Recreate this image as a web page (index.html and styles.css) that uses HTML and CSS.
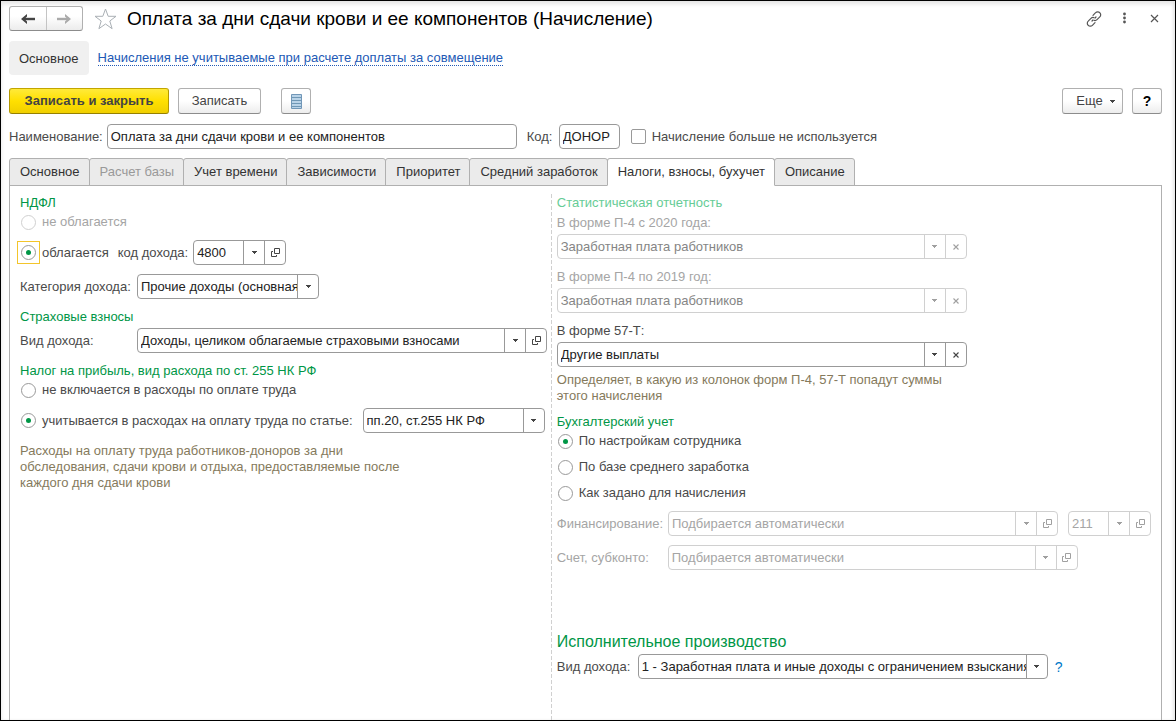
FILE: index.html
```html
<!DOCTYPE html>
<html lang="ru">
<head>
<meta charset="utf-8">
<title>Оплата за дни сдачи крови и ее компонентов (Начисление)</title>
<link rel="stylesheet" href="styles.css">
</head>
<body>
<svg class="defs" aria-hidden="true">
  <symbol id="i-down" viewBox="0 0 5 3"><path d="M0 0h5v1h-1v1h-1v1h-1v-1h-1v-1h-1z" fill="currentColor"/></symbol>
  <symbol id="i-open" viewBox="0 0 9 9"><path d="M3.5 .5h5v5h-5zM2 3.500h-1.500v5h5v-1.500" fill="none" stroke="currentColor"/></symbol>
  <symbol id="i-clear" viewBox="0 0 6 6"><path d="M.5 .5l5 5M5.500 .5l-5 5" fill="none" stroke="currentColor" stroke-width="1.100"/></symbol>
</svg>
<div class="window">
  <header class="titlebar">
    <div class="history">
      <button class="history-btn" type="button" aria-label="Назад"><svg width="14" height="10" viewBox="0 0 14 10"><path d="M2 5h12" stroke="#444" stroke-width="2.400"/><path d="M6 0v2.500L3.500 5 6 7.500V10L0 5z" fill="#444"/></svg></button>
      <button class="history-btn" type="button" aria-label="Вперед"><svg width="14" height="10" viewBox="0 0 14 10"><path d="M12 5H0" stroke="#aaa" stroke-width="2.400"/><path d="M8 0v2.500L10.500 5 8 7.500V10l6-5z" fill="#aaa"/></svg></button>
    </div>
    <button class="plain-btn star" type="button" aria-label="Избранное"><svg width="23" height="22" viewBox="0 0 23 22"><path d="M11.500 1l2.700 7.300h7.800l-6.200 4.700 2.300 7.700-6.600-4.700-6.600 4.700 2.300-7.700L1 8.300h7.800z" fill="#fff" stroke="#aab0b5"/></svg></button>
    <h1 class="title">Оплата за дни сдачи крови и ее компонентов (Начисление)</h1>
    <div class="window-tools">
      <button class="plain-btn" type="button" aria-label="Ссылка"><svg width="16" height="16" viewBox="0 0 16 16" fill="none" stroke="#555" stroke-width="1.200" stroke-linecap="round"><path d="M7 4.300l2.600-2.600a2.900 2.900 0 0 1 4.200 0 2.900 2.900 0 0 1 0 4.200L11 8.700a2.900 2.900 0 0 1-2.800.7M9 11.700l-2.600 2.600a2.900 2.900 0 0 1-4.200 0 2.900 2.900 0 0 1 0-4.200L5 7.300a2.900 2.900 0 0 1 2.800-.7M6 10l1-1M9 7l1-1"/></svg></button>
      <button class="plain-btn" type="button" aria-label="Меню"><svg width="16" height="16" viewBox="0 0 16 16" fill="#555"><circle cx="8.500" cy="3" r="1.400"/><circle cx="8.500" cy="7" r="1.400"/><circle cx="8.500" cy="11" r="1.400"/></svg></button>
      <button class="plain-btn" type="button" aria-label="Закрыть"><svg width="16" height="16" viewBox="0 0 16 16"><path d="M5 4l7 7M12 4l-7 7" stroke="#555" stroke-width="1.200"/></svg></button>
    </div>
  </header>

  <nav class="sections">
    <a class="section-current" href="#main">Основное</a>
    <a class="section-link" href="#list">Начисления не учитываемые при расчете доплаты за совмещение</a>
  </nav>

  <div class="toolbar">
    <button class="btn btn-primary" type="button">Записать и закрыть</button>
    <button class="btn btn-save" type="button">Записать</button>
    <button class="btn btn-icon btn-list" type="button" aria-label="Список"><svg width="11" height="15" viewBox="0 0 11 15"><path d="M.5 .5h10v14H.5z" fill="#b9d3e8" stroke="#7197b8"/><path d="M1 3.500h9M1 6.500h9M1 9.500h9M1 12.500h9" stroke="#6f97b5"/></svg></button>
    <button class="btn btn-more" type="button">Еще <svg width="5" height="3"><use href="#i-down"/></svg></button>
    <button class="btn btn-icon btn-help" type="button">?</button>
  </div>

  <div class="row ident">
    <label for="name">Наименование:</label>
    <input class="text name" id="name" type="text" value="Оплата за дни сдачи крови и ее компонентов">
    <label class="code-label" for="code">Код:</label>
    <input class="text code" id="code" type="text" value="ДОНОР">
    <label class="check"><input type="checkbox">Начисление больше не используется</label>
  </div>

  <div class="tabs" role="tablist">
    <button class="tab" role="tab" type="button">Основное</button>
    <button class="tab" role="tab" type="button" disabled>Расчет базы</button>
    <button class="tab" role="tab" type="button">Учет времени</button>
    <button class="tab" role="tab" type="button">Зависимости</button>
    <button class="tab" role="tab" type="button">Приоритет</button>
    <button class="tab" role="tab" type="button">Средний заработок</button>
    <button class="tab tab-active" role="tab" type="button" aria-selected="true">Налоги, взносы, бухучет</button>
    <button class="tab" role="tab" type="button">Описание</button>
  </div>

  <main class="panel">
    <div class="column">
      <section class="group">
        <h2>НДФЛ</h2>
        <div class="options">
          <label class="radio off"><input type="radio" name="ndfl" disabled>не облагается</label>
          <div class="row">
            <label class="radio"><span class="focus-frame"><input type="radio" name="ndfl" checked></span>облагается</label>
            <label class="income-code" for="income-code">код дохода:</label>
            <div class="combo w-code"><select id="income-code"><option>4800</option></select><span class="arrow"><svg width="5" height="3"><use href="#i-down"/></svg></span><button type="button" aria-label="Открыть"><svg width="9" height="9"><use href="#i-open"/></svg></button></div>
          </div>
        </div>
      </section>
      <div class="row">
        <label class="cap" for="category">Категория дохода:</label>
        <div class="combo w-category"><select id="category"><option>Прочие доходы (основная налоговая база)</option></select><span class="arrow"><svg width="5" height="3"><use href="#i-down"/></svg></span></div>
      </div>
      <section class="group">
        <h2>Страховые взносы</h2>
        <div class="row">
          <label class="cap" for="insurance">Вид дохода:</label>
          <div class="combo w-wide"><select id="insurance"><option>Доходы, целиком облагаемые страховыми взносами</option></select><span class="arrow"><svg width="5" height="3"><use href="#i-down"/></svg></span><button type="button" aria-label="Открыть"><svg width="9" height="9"><use href="#i-open"/></svg></button></div>
        </div>
      </section>
      <section class="group">
        <h2>Налог на прибыль, вид расхода по ст. 255 НК РФ</h2>
        <div class="options">
          <label class="radio"><input type="radio" name="profit">не включается в расходы по оплате труда</label>
          <div class="row article">
            <label class="radio"><input type="radio" name="profit" checked>учитывается в расходах на оплату труда по статье:</label>
            <div class="combo w-category"><select aria-label="Статья"><option>пп.20, ст.255 НК РФ</option></select><span class="arrow"><svg width="5" height="3"><use href="#i-down"/></svg></span></div>
          </div>
        </div>
      </section>
      <p class="hint">Расходы на оплату труда работников-доноров за дни обследования, сдачи крови и отдыха, предоставляемые после каждого дня сдачи крови</p>
    </div>

    <div class="column column-right">
      <section class="group off">
        <h2>Статистическая отчетность</h2>
        <label class="above" for="p4-2020">В форме П-4 с 2020 года:</label>
        <div class="combo w-wide"><select id="p4-2020" disabled><option>Заработная плата работников</option></select><span class="arrow"><svg width="5" height="3"><use href="#i-down"/></svg></span><button type="button" aria-label="Очистить" disabled><svg width="6" height="6"><use href="#i-clear"/></svg></button></div>
      </section>
      <div class="group off">
        <label class="above" for="p4-2019">В форме П-4 по 2019 год:</label>
        <div class="combo w-wide"><select id="p4-2019" disabled><option>Заработная плата работников</option></select><span class="arrow"><svg width="5" height="3"><use href="#i-down"/></svg></span><button type="button" aria-label="Очистить" disabled><svg width="6" height="6"><use href="#i-clear"/></svg></button></div>
      </div>
      <div class="group">
        <label class="above" for="f57">В форме 57-Т:</label>
        <div class="combo w-wide"><select id="f57"><option>Другие выплаты</option></select><span class="arrow"><svg width="5" height="3"><use href="#i-down"/></svg></span><button type="button" aria-label="Очистить"><svg width="6" height="6"><use href="#i-clear"/></svg></button></div>
        <p class="hint">Определяет, в какую из колонок форм П-4, 57-Т попадут суммы этого начисления</p>
      </div>
      <section class="group">
        <h2>Бухгалтерский учет</h2>
        <div class="options">
          <label class="radio"><input type="radio" name="acc" checked>По настройкам сотрудника</label>
          <label class="radio"><input type="radio" name="acc">По базе среднего заработка</label>
          <label class="radio"><input type="radio" name="acc">Как задано для начисления</label>
          <div class="row off auto">
            <label class="cap-right" for="fin">Финансирование:</label>
            <div class="combo w-fin"><select id="fin" disabled><option>Подбирается автоматически</option></select><span class="arrow"><svg width="5" height="3"><use href="#i-down"/></svg></span><button type="button" aria-label="Открыть" disabled><svg width="9" height="9"><use href="#i-open"/></svg></button></div>
            <div class="combo w-kosgu"><select aria-label="КОСГУ" disabled><option>211</option></select><span class="arrow"><svg width="5" height="3"><use href="#i-down"/></svg></span><button type="button" aria-label="Открыть" disabled><svg width="9" height="9"><use href="#i-open"/></svg></button></div>
          </div>
        </div>
      </section>
      <div class="row off auto">
        <label class="cap-right" for="account">Счет, субконто:</label>
        <div class="combo w-wide"><select id="account" disabled><option>Подбирается автоматически</option></select><span class="arrow"><svg width="5" height="3"><use href="#i-down"/></svg></span><button type="button" aria-label="Открыть" disabled><svg width="9" height="9"><use href="#i-open"/></svg></button></div>
      </div>
      <section class="group enforcement">
        <h2 class="big">Исполнительное производство</h2>
        <div class="row">
          <label class="cap-enf" for="enf">Вид дохода:</label>
          <div class="combo w-wide"><select id="enf"><option>1 - Заработная плата и иные доходы с ограничением взыскания</option></select><span class="arrow"><svg width="5" height="3"><use href="#i-down"/></svg></span></div>
          <a class="help" href="#help">?</a>
        </div>
      </section>
    </div>
  </main>
</div>
</body>
</html>
```
FILE: styles.css
```css
* { box-sizing: border-box; }

body {
  margin: 0;
  background: #fff;
  color: #4a4a4a;
  font: 13px/16px "Liberation Sans", Arial, sans-serif;
}

button, input, select { font: inherit; color: inherit; margin: 0; }
h1, h2, p { margin: 0; font-weight: normal; }
svg { display: block; flex: none; }
.defs { position: absolute; width: 0; height: 0; }

.window {
  display: flex;
  flex-direction: column;
  min-height: 100vh;
  padding: 5px 13px 0 8px;
  border: 1px solid #000;
  box-shadow: inset 0 3px 4px #e4e4e4, inset -2px 0 3px #eee;
}

.titlebar { display: flex; align-items: center; height: 25px; }
.history {
  display: flex;
  width: 74px;
  height: 25px;
  border: 1px solid #b0b0b0;
  border-bottom-color: #8c8c8c;
  border-radius: 3px;
  background: linear-gradient(#fff 40%, #ececec);
}
.history-btn { flex: 1; display: grid; place-items: center; padding: 0; border: 0; background: none; }
.history-btn + .history-btn { border-left: 1px solid #c4c4c4; }
.plain-btn { padding: 0; border: 0; background: none; }
.star { margin: 0 10px 0 11px; }
.title { flex: 1; color: #000; font-size: 19px; line-height: 24px; white-space: nowrap; }
.window-tools { display: flex; gap: 14px; }

.sections { display: flex; align-items: center; gap: 9px; margin-top: 10px; }
.section-current {
  padding: 10px 10px 8px;
  border-radius: 4px;
  background: #f0f0f0;
  color: #333;
  text-decoration: none;
}
.section-link { padding-top: 1px; color: #2259b5; line-height: 14px; text-decoration: none; border-bottom: 1px dotted #2259b5; }

.toolbar { display: flex; gap: 9px; margin-top: 13px; }
.btn {
  height: 26px;
  padding: 0;
  border: 1px solid #b0b0b0;
  border-bottom-color: #8c8c8c;
  border-radius: 3px;
  background: linear-gradient(#fff 50%, #ededed);
  color: #444;
}
.btn-primary {
  width: 160px;
  border-color: #c2a500 #b39800 #968000;
  background: linear-gradient(#ffea3a, #ffe000 50%, #f0cf00);
  font-weight: bold;
}
.btn-save { width: 83px; }
.btn-icon { display: grid; place-items: center; width: 30px; }
.btn-list { margin-left: 11px; }
.btn-more { display: flex; align-items: center; justify-content: center; gap: 7px; width: 61px; margin-left: auto; padding-left: 6px; }
.btn-help { color: #000; font-size: 14px; font-weight: bold; }

.row { display: flex; align-items: center; gap: 5px; }
.ident { gap: 4px; margin-top: 10px; }
.text { height: 25px; padding: 0 3px; border: 1px solid #999; border-radius: 4px; background: #fff; color: #222; }
.name { width: 410px; }
.code { width: 61px; }
.code-label { min-width: 28px; margin-left: 6px; }
.check { display: flex; align-items: center; gap: 6px; margin-left: 7px; }
.check input { appearance: none; width: 15px; height: 15px; border: 1px solid #999; border-radius: 2px; background: #fff; }
.check input:checked { background: #009646; }

.tabs { display: flex; margin-top: 9px; }
.tab {
  height: 28px;
  margin: 0 0 -1px -1px;
  padding: 0 9px 0 10px;
  border: 1px solid #b0b0b0;
  border-radius: 3px 3px 0 0;
  background: #ebebeb;
  color: #333;
  white-space: nowrap;
}
.tab:first-child { margin-left: 0; }
.tab:disabled { color: #999; }
.tab-active { position: relative; border-bottom-color: #fff; background: #fff; }

.panel {
  flex: 1;
  display: grid;
  grid-template-columns: 541fr 610fr;
  padding-top: 8px;
  border: 1px solid #b0b0b0;
  border-bottom: 0;
}
.column { display: flex; flex-direction: column; gap: 9px; padding-left: 10px; }
.column-right {
  padding: 0 10px 0 6px;
  background: repeating-linear-gradient(#d0d0d0 0 4px, transparent 4px 6px) 0 0 / 1px 100% no-repeat;
}

.group { display: flex; flex-direction: column; gap: 3px; }
.options { display: flex; flex-direction: column; gap: 10px; }
h2 { padding-top: 1px; color: #009646; font-size: 13px; line-height: 16px; }
.above { padding-top: 1px; }
.big { font-size: 16px; line-height: 18px; }
.enforcement { margin-top: 53px; }
.hint { max-width: 400px; padding-top: 1px; color: #857a5c; }
.group .hint { padding-top: 2px; }

.off { color: #a5a5a5; }
.off h2 { color: #66cc96; }

.radio { display: flex; align-items: center; gap: 6px; padding-left: 1px; white-space: nowrap; }
.radio input {
  appearance: none;
  display: grid;
  place-items: center;
  flex: none;
  width: 15px;
  height: 15px;
  border: 1px solid #999;
  border-radius: 50%;
  background: #fff;
}
.radio input:disabled { border-color: #d0d0d0; }
.radio input:checked::before { content: ""; width: 5px; height: 5px; border-radius: 50%; background: #009646; }
.focus-frame { display: grid; outline: 1px solid #f3c52b; outline-offset: 3px; }

.income-code { margin-left: 4px; }
.cap { min-width: 112px; }
.cap-right { min-width: 106px; }
.cap-enf { min-width: 76px; }
.article { gap: 10px; }

.combo {
  display: grid;
  grid-template-columns: minmax(0, 1fr) 21px;
  grid-auto-columns: 21px;
  height: 25px;
  border: 1px solid #999;
  border-radius: 4px;
  background: #fff;
  color: #444;
}
.combo select {
  grid-area: 1 / 1 / 2 / 3;
  appearance: none;
  min-width: 0;
  margin-right: 21px;
  padding: 0 0 0 3px;
  border: 0;
  background: none;
  color: #222;
  opacity: 1;
}
.arrow { grid-area: 1 / 2; display: grid; place-items: center; border-left: 1px solid #999; pointer-events: none; }
.combo button { grid-area: 1 / 3; display: grid; place-items: center; padding: 0; border: 0; border-left: 1px solid #999; background: none; }
.off .combo, .off .arrow, .off .combo button { border-color: #d0d0d0; color: #a0a0a0; }
.off .combo select { color: #858585; }
.auto .combo select { color: #a5a5a5; }

.w-code { width: 93px; }
.w-category { width: 182px; }
.w-wide { width: 410px; }
.w-fin { width: 390px; }
.w-kosgu { width: 83px; margin-left: 5px; }

.help { margin-left: 2px; color: #0078c8; font-size: 14px; text-decoration: none; }
```
